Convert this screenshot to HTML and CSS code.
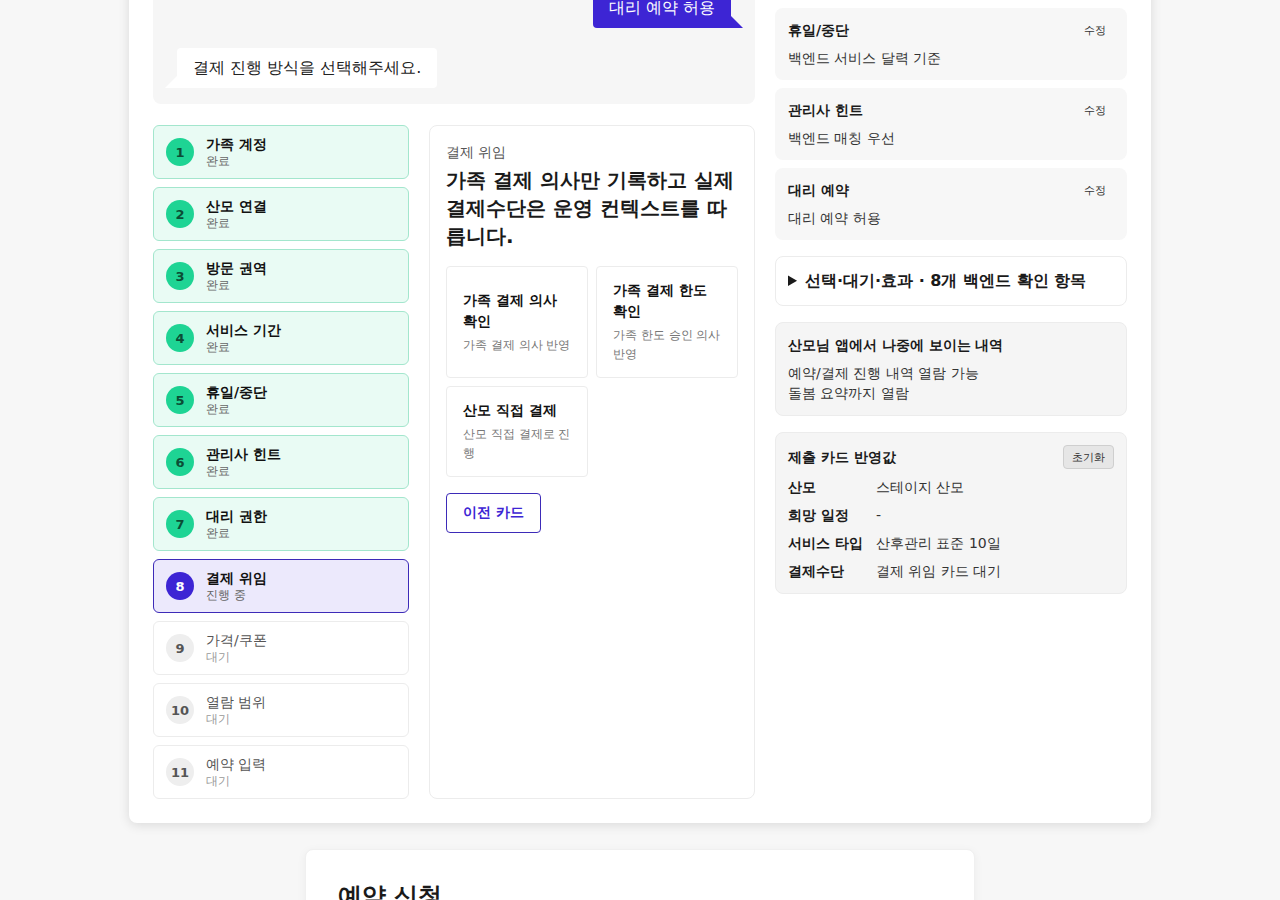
FILE: index.html
```html
<!DOCTYPE html>
<html lang="ko">
<head>
  <meta charset="UTF-8">
  <meta name="viewport" content="width=device-width, initial-scale=1.0">
  <title>산후관리 예약</title>
  <link rel="stylesheet" href="styles.css">
</head>
<body>

<!-- 예약 카드 흐름 -->
<main class="booking">
  <div class="flow">
    <!-- 대화 기록 -->
    <section class="chat">
      <div class="chat-note">대리 예약 여부를 알려주세요.</div>
      <div class="bubble bubble-user">대리 예약 허용</div>
      <div class="bubble bubble-bot">결제 진행 방식을 선택해주세요.</div>
    </section>

    <div class="work">
      <!-- 단계 목록 -->
      <ol class="steps">
        <li class="step done"><span class="step-num">1</span><div><b>가족 계정</b><small>완료</small></div></li>
        <li class="step done"><span class="step-num">2</span><div><b>산모 연결</b><small>완료</small></div></li>
        <li class="step done"><span class="step-num">3</span><div><b>방문 권역</b><small>완료</small></div></li>
        <li class="step done"><span class="step-num">4</span><div><b>서비스 기간</b><small>완료</small></div></li>
        <li class="step done"><span class="step-num">5</span><div><b>휴일/중단</b><small>완료</small></div></li>
        <li class="step done"><span class="step-num">6</span><div><b>관리사 힌트</b><small>완료</small></div></li>
        <li class="step done"><span class="step-num">7</span><div><b>대리 권한</b><small>완료</small></div></li>
        <li class="step active"><span class="step-num">8</span><div><b>결제 위임</b><small>진행 중</small></div></li>
        <li class="step"><span class="step-num">9</span><div><b>가격/쿠폰</b><small>대기</small></div></li>
        <li class="step"><span class="step-num">10</span><div><b>열람 범위</b><small>대기</small></div></li>
        <li class="step"><span class="step-num">11</span><div><b>예약 입력</b><small>대기</small></div></li>
      </ol>

      <!-- 현재 카드 -->
      <section class="step-card">
        <p class="step-label">결제 위임</p>
        <h2 class="step-title">가족 결제 의사만 기록하고 실제 결제수단은 운영 컨텍스트를 따릅니다.</h2>
        <div class="options">
          <button class="option"><b>가족 결제 의사 확인</b><span>가족 결제 의사 반영</span></button>
          <button class="option"><b>가족 결제 한도 확인</b><span>가족 한도 승인 의사 반영</span></button>
          <button class="option"><b>산모 직접 결제</b><span>산모 직접 결제로 진행</span></button>
        </div>
        <button class="btn-prev">이전 카드</button>
      </section>
    </div>
  </div>

  <!-- 오른쪽 요약 -->
  <aside class="side">
    <div class="summary-list">
      <div class="summary"><div class="summary-head"><b>서비스 기간</b><button class="edit">수정</button></div><p>산후관리 표준 10일</p></div>
      <div class="summary"><div class="summary-head"><b>휴일/중단</b><button class="edit">수정</button></div><p>백엔드 서비스 달력 기준</p></div>
      <div class="summary"><div class="summary-head"><b>관리사 힌트</b><button class="edit">수정</button></div><p>백엔드 매칭 우선</p></div>
      <div class="summary"><div class="summary-head"><b>대리 예약</b><button class="edit">수정</button></div><p>대리 예약 허용</p></div>
    </div>

    <details class="checks">
      <summary>선택·대기·효과 · 8개 백엔드 확인 항목</summary>
    </details>

    <div class="box">
      <h3>산모님 앱에서 나중에 보이는 내역</h3>
      <p>예약/결제 진행 내역 열람 가능<br>돌봄 요약까지 열람</p>
    </div>

    <div class="box">
      <div class="box-head">
        <h3>제출 카드 반영값</h3>
        <button class="btn-reset">초기화</button>
      </div>
      <dl class="values">
        <dt>산모</dt><dd>스테이지 산모</dd>
        <dt>희망 일정</dt><dd>-</dd>
        <dt>서비스 타입</dt><dd>산후관리 표준 10일</dd>
        <dt>결제수단</dt><dd>결제 위임 카드 대기</dd>
      </dl>
    </div>
  </aside>
</main>

<!-- 예약 신청 -->
<section class="request">
  <h2>예약 신청</h2>
  <p>제출 카드 반영값을 확인한 뒤 예약을 신청하세요.</p>
</section>

</body>
</html>
```

FILE: styles.css
```css
body {
  font-family: "DejaVu Sans", sans-serif;
  background-color: #f7f7f7;
  color: #1a1a1a;
  margin: 0;
}

button {
  font-family: inherit;
  cursor: pointer;
}

.booking {
  width: 1022px;
  box-sizing: border-box;
  margin: -96px auto 0;
  padding: 24px;
  background-color: #fff;
  border-radius: 8px;
  box-shadow: 0 2px 12px rgba(0, 0, 0, 0.12);
  display: grid;
  grid-template-columns: 602px 352px;
  gap: 20px;
}

.flow {
  display: flex;
  flex-direction: column;
  gap: 21px;
}

/* 대화 */
.chat {
  background-color: #f6f6f6;
  border-radius: 8px;
  padding: 16px 24px;
  display: flex;
  flex-direction: column;
  gap: 20px;
}

.chat-note {
  font-size: 13px;
  line-height: 24px;
  color: #888;
  text-align: center;
}

.bubble {
  position: relative;
  font-size: 16px;
  line-height: 20px;
  padding: 10px 16px;
}

.bubble::after {
  content: "";
  position: absolute;
  bottom: 0;
  width: 12px;
  height: 12px;
}

.bubble-user {
  align-self: flex-end;
  background-color: #3d25d4;
  color: #fff;
  border-radius: 4px 4px 0 4px;
}

.bubble-user::after {
  right: -12px;
  background-color: #3d25d4;
  clip-path: polygon(0 0, 100% 100%, 0 100%);
}

.bubble-bot {
  align-self: flex-start;
  background-color: #fff;
  color: #222;
  border-radius: 4px 4px 4px 0;
}

.bubble-bot::after {
  left: -12px;
  background-color: #fff;
  clip-path: polygon(100% 0, 100% 100%, 0 100%);
}

.work {
  display: grid;
  grid-template-columns: 256px 326px;
  gap: 20px;
}

/* 단계 목록 */
.steps {
  list-style: none;
  margin: 0;
  padding: 0;
  display: flex;
  flex-direction: column;
  gap: 8px;
}

.step {
  height: 54px;
  box-sizing: border-box;
  border: 1px solid #ececec;
  border-radius: 6px;
  padding: 0 12px;
  display: flex;
  align-items: center;
  gap: 12px;
  background-color: #fff;
}

.step-num {
  width: 28px;
  height: 28px;
  border-radius: 50%;
  background-color: #eee;
  color: #555;
  font-size: 13px;
  font-weight: bold;
  display: flex;
  align-items: center;
  justify-content: center;
  flex-shrink: 0;
}

.step b {
  display: block;
  font-size: 14px;
  line-height: 18px;
  font-weight: 500;
  color: #555;
}

.step small {
  display: block;
  font-size: 12px;
  line-height: 16px;
  color: #999;
}

.step.done {
  background-color: #e9fbf4;
  border-color: #a3e6cd;
}

.step.done .step-num {
  background-color: #1ed494;
  color: #0b4d35;
}

.step.done b,
.step.active b {
  font-weight: bold;
  color: #111;
}

.step.done small,
.step.active small {
  color: #666;
}

.step.active {
  background-color: #ece9fc;
  border-color: #3d2bb8;
}

.step.active .step-num {
  background-color: #3d25d4;
  color: #fff;
}

/* 현재 카드 */
.step-card {
  border: 1px solid #ececec;
  border-radius: 8px;
  padding: 16px;
}

.step-label {
  margin: 0;
  font-size: 14px;
  line-height: 20px;
  color: #555;
}

.step-title {
  margin: 4px 0 16px;
  font-size: 20px;
  line-height: 28px;
  font-weight: bold;
}

.options {
  display: grid;
  grid-template-columns: 1fr 1fr;
  gap: 8px;
  margin-bottom: 16px;
}

.option {
  display: flex;
  flex-direction: column;
  justify-content: center;
  gap: 4px;
  text-align: left;
  background-color: #fff;
  border: 1px solid #ececec;
  border-radius: 4px;
  padding: 13px 16px;
  color: #111;
}

.option b {
  font-size: 14px;
  line-height: 21px;
}

.option span {
  font-size: 12px;
  line-height: 19px;
  color: #777;
}

.btn-prev {
  height: 40px;
  padding: 0 16px;
  background-color: #fff;
  border: 1px solid #3d2bb8;
  border-radius: 4px;
  color: #3d25d4;
  font-size: 14px;
  font-weight: bold;
}

/* 오른쪽 요약 */
.side {
  display: flex;
  flex-direction: column;
  gap: 16px;
}

.summary-list {
  display: flex;
  flex-direction: column;
  gap: 8px;
}

.summary {
  background-color: #f7f7f7;
  border-radius: 8px;
  padding: 12px 13px;
}

.summary-head {
  display: flex;
  justify-content: space-between;
  align-items: center;
  font-size: 14px;
  line-height: 20px;
}

.edit {
  background: none;
  border: none;
  padding: 0 8px;
  font-size: 11px;
  color: #333;
}

.summary p {
  margin: 8px 0 0;
  font-size: 14px;
  line-height: 20px;
  color: #333;
}

.checks {
  border: 1px solid #ececec;
  border-radius: 8px;
  padding: 12px;
}

.checks summary {
  font-size: 16px;
  line-height: 24px;
  font-weight: bold;
  cursor: pointer;
}

.box {
  background-color: #f5f5f5;
  border: 1px solid #ececec;
  border-radius: 8px;
  padding: 12px;
}

.box h3 {
  margin: 0;
  font-size: 14px;
  line-height: 20px;
}

.box p {
  margin: 8px 0 0;
  font-size: 14px;
  line-height: 20px;
  color: #333;
}

.box-head {
  display: flex;
  justify-content: space-between;
  align-items: center;
}

.btn-reset {
  height: 24px;
  padding: 0 8px;
  background-color: #e6e6e6;
  border: 1px solid #cfcfcf;
  border-radius: 4px;
  font-size: 11px;
  color: #333;
}

.values {
  margin: 8px 0 0;
  display: grid;
  grid-template-columns: 88px 1fr;
  row-gap: 8px;
  font-size: 14px;
  line-height: 20px;
}

.values dt {
  font-weight: bold;
}

.values dd {
  margin: 0;
  color: #333;
}

/* 예약 신청 */
.request {
  width: 670px;
  box-sizing: border-box;
  margin: 26px auto 40px;
  padding: 32px;
  background-color: #fff;
  border: 1px solid #f0f0f0;
  border-radius: 8px;
  box-shadow: 0 2px 10px rgba(0, 0, 0, 0.05);
}

.request h2 {
  margin: 0;
  font-size: 24px;
  line-height: 28px;
}
```
